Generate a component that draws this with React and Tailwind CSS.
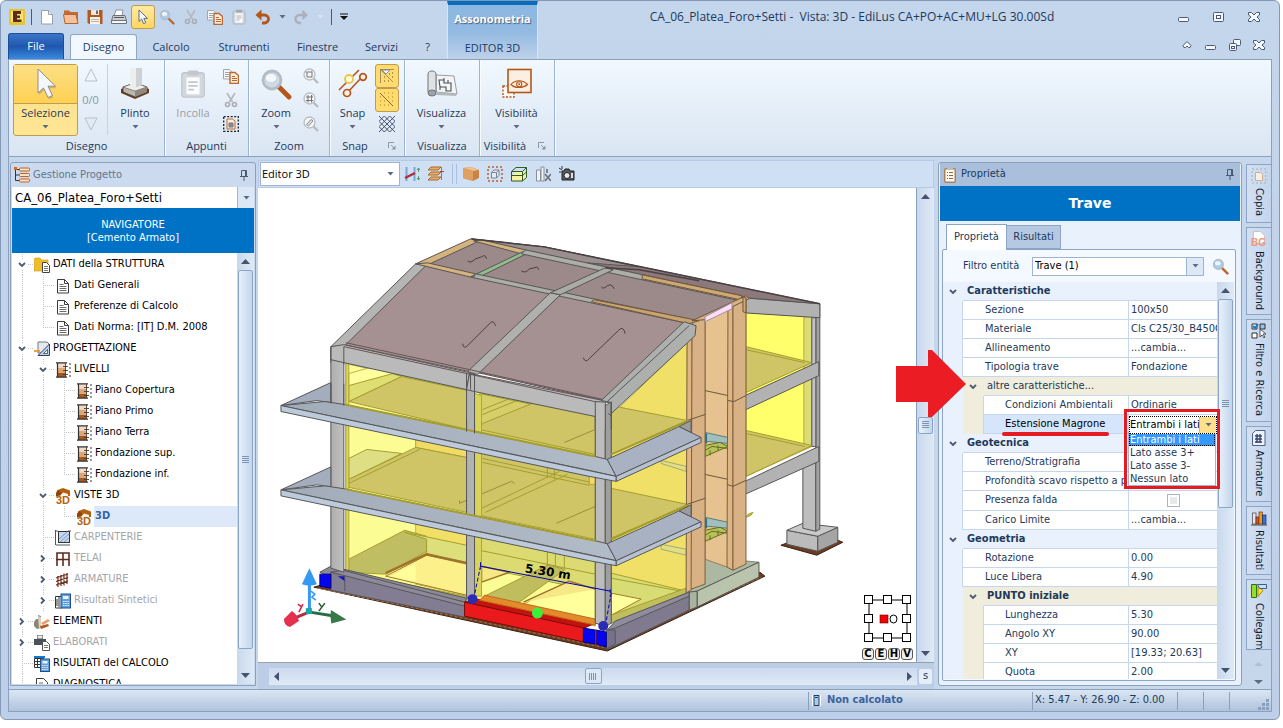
import React from "react";

const UI = "font-['Open_Sans','Noto_Sans',sans-serif]";
const TAHOMA = "font-['DejaVu_Sans_Condensed','DejaVu_Sans',sans-serif]";

/* ---------- small icons ---------- */

const Ico = ({ w = 16, h = 16, box, children, label }) => (
  <svg width={w} height={h} viewBox={box || `0 0 ${w} ${h}`} className="shrink-0" fill="none" aria-hidden={label ? undefined : true} aria-label={label}>
    {children}
  </svg>
);

const Down = ({ color = "#5b6b85" }) => (
  <Ico w={7} h={4}><path d="M.5 0h6L3.500 3.500z" fill={color} /></Ico>
);

const AppLogo = () => (
  <Ico>
    <rect width="16" height="16" rx="1" fill="#e9c52c" />
    <rect x="2" y="2" width="12" height="11" fill="#f8e27a" />
    <path d="M4 2h8v3H8v1.500h3v2.500H8V10.500h4.500V13H4z" fill="#5c2c1c" />
  </Ico>
);
const NewIcon = () => (
  <Ico><path d="M2.500 1.500h7l4 4v9.500h-11z" fill="#fff" stroke="#9a9fa6" /><path d="M9.500 1.500v4h4" stroke="#9a9fa6" fill="#e8ecf0" /></Ico>
);
const OpenIcon = () => (
  <Ico>
    <path d="M1 4V1.500h5L7.500 3H15v11H2z" fill="#c26b33" />
    <path d="M.5 5.500h12.500l2 9H2z" fill="#f3c09a" stroke="#b9632e" />
  </Ico>
);
const SaveIcon = () => (
  <Ico>
    <path d="M.5 1h15v14H2L.5 13.500z" fill="#b4581f" />
    <rect x="4" y="1" width="8" height="5" fill="#f2ebe2" /><rect x="9" y="1.500" width="2" height="3.500" fill="#6b6b6b" />
    <rect x="3" y="8" width="10" height="7" fill="#f7f2ea" /><path d="M4 10.500h8M4 12.500h8" stroke="#b9b2a8" />
  </Ico>
);
const PrintIcon = () => (
  <Ico>
    <path d="M5 1h7l-1 6H3z" fill="#fff" stroke="#8d9299" />
    <path d="M2 6.500h12l1.500 5.500H.5z" fill="#c9ccd0" stroke="#6d7278" />
    <path d="M.5 11.500h15v3H.5z" fill="#f4f5f6" stroke="#6d7278" /><path d="M3 8.500h10" stroke="#555" />
  </Ico>
);
const Cursor = () => (
  <Ico>
    <path d="M4 1v11.500l2.700-2.400 1.900 4.600 2.200-1-2-4.300h3.700z" fill="#f6f8fb" stroke="#5d6b85" strokeWidth="1" />
  </Ico>
);
const BigCursor = () => (
  <Ico w={32} h={32}>
    <path d="M9 3v24l5.500-5 4.500 9.500 4.500-2-4.500-9.300h7.500z" fill="#a98f52" opacity=".45" />
    <path d="M8 1v24l5.500-5 4.500 9.500 4.500-2-4.500-9.300h7.500z" fill="#f5f6f8" stroke="#8d8f93" strokeWidth="1" />
  </Ico>
);
const Magnifier = ({ s = 16, glass = "#a9cdec", handle = "#b9682f" }) => (
  <Ico w={s} h={s} box="0 0 16 16">
    <path d="M9.500 9.500l5 5" stroke={handle} strokeWidth="2.400" strokeLinecap="round" />
    <circle cx="6" cy="6" r="4.500" fill={glass} stroke="#b5bcc4" strokeWidth="1.400" />
    <ellipse cx="5.500" cy="5" rx="2.600" ry="2" fill="#fff" opacity=".8" />
  </Ico>
);
const Scissors = () => (
  <Ico>
    <path d="M4 1l5.500 9M12 1L6.500 10" stroke="#b6bac0" strokeWidth="1.800" />
    <circle cx="4.500" cy="12.500" r="2" stroke="#a9adb3" strokeWidth="1.600" /><circle cx="11.500" cy="12.500" r="2" stroke="#a9adb3" strokeWidth="1.600" />
  </Ico>
);
const CopyIcon = () => (
  <Ico>
    <path d="M.5 1.500h6l2 2v7.500h-8z" fill="#f5f6f8" stroke="#a3a7ad" /><path d="M2 4.500h4M2 6.500h4M2 8.500h4" stroke="#a3a7ad" />
    <path d="M7 4.500h5l3.500 3V15.500H7z" fill="#f9ece0" stroke="#b9682f" strokeWidth="1.400" /><path d="M9 8.500h3M9 10.500h5M9 12.500h5" stroke="#b9682f" />
  </Ico>
);
const PasteIcon = ({ s = 16, c = "#a3a7ad" }) => (
  <Ico w={s} h={s} box="0 0 16 16">
    <rect x="2" y="2" width="12" height="13" rx="1.500" fill="#d3d8df" stroke={c} strokeWidth=".7" />
    <rect x="4.500" y="4.500" width="7" height="9" fill="#fbfcfd" /><rect x="5" y=".8" width="6" height="2.700" rx="1" fill={c} />
    <path d="M5.500 7h5M5.500 9h5M5.500 11h3" stroke={c} strokeWidth=".9" />
  </Ico>
);
const Undo = () => (
  <Ico><path d="M4 6h5.500a3.700 3.700 0 010 8H7" stroke="#b4561a" strokeWidth="2.800" /><path d="M.5 6L6.500.5v11z" fill="#b4561a" /></Ico>
);
const Redo = () => (
  <Ico><path d="M11 6H6.500a3.700 3.700 0 000 8H8" stroke="#a9b0bb" strokeWidth="2.400" /><path d="M15 6L9.500.8v10.400z" fill="#a9b0bb" /></Ico>
);
const SelectClip = () => (
  <Ico>
    <rect x=".7" y=".7" width="14.600" height="14.600" stroke="#1b2230" strokeWidth="1.300" strokeDasharray="2 1.500" />
    <path d="M4 3h5.500l2.500 2v8H4z" fill="#f9ece0" stroke="#b9682f" /><path d="M6 7h4v4H6zM8 7v4M6 9h4" stroke="#4a4f58" strokeWidth=".8" />
  </Ico>
);
const PlinthIcon = () => (
  <Ico w={32} h={32}>
    <path d="M2 21l14-5 14 5v4l-14 6-14-6z" fill="#6b3d20" />
    <path d="M4 19l12-4 12 4v5l-12 5-12-5z" fill="#b9b6ad" stroke="#3b322b" strokeWidth=".8" />
    <path d="M4 19l12-4 12 4-12 4z" fill="#f0efe9" stroke="#5a5650" strokeWidth=".6" />
    <path d="M16 23l12-4v5l-12 5z" fill="#8f8a80" />
    <path d="M11 0h12v17l-6 2.500-6-2.500z" fill="#cdd0d4" /><path d="M11 0h6v19.500l-6-2.500z" fill="#eceef0" />
  </Ico>
);
const SnapIcon = () => (
  <Ico w={32} h={32}>
    <path d="M2 22L22 2M10 25L25 9" stroke="#b4561a" strokeWidth="1.600" />
    <circle cx="12" cy="11" r="4" fill="#fffbd0" stroke="#ecc44c" strokeWidth="1.800" />
    <circle cx="26" cy="9" r="3.300" fill="#fbeee0" stroke="#b4561a" strokeWidth="1.700" /><circle cx="10" cy="25" r="3.500" fill="#fbeee0" stroke="#b4561a" strokeWidth="1.700" />
  </Ico>
);
const PlanIcon = () => (
  <Ico w={32} h={32}>
    <path d="M10 7l18 1 3 18-21-2z" fill="#f3f4f4" stroke="#9a9ea4" />
    <path d="M2 24V6c0-4 8-4 8 0v18z" fill="#dfe2e5" stroke="#6f747b" /><ellipse cx="6" cy="25" rx="4" ry="3" fill="#9ea3a9" stroke="#6f747b" /><path d="M10 24l21 2-1 2-20-1z" fill="#b5b9be" />
    <path d="M13 12h5v3h7v8h-5v-4h-6zM18 10v4M22 12v3M14 22v-4" stroke="#4a4f56" strokeWidth="1.100" />
  </Ico>
);
const EyeIcon = () => (
  <Ico w={32} h={32}>
    <rect x="2" y="18" width="11" height="11" fill="#fff8ef" stroke="#b4561a" strokeDasharray="2 1.500" strokeWidth="1.400" />
    <rect x="7" y="1.500" width="23" height="23" fill="#fbeee2" stroke="#b4561a" strokeWidth="1.600" />
    <path d="M10 16.500c4-5 12-5 16.500 0-4.500 4-12.500 4-16.500 0z" stroke="#b4561a" strokeWidth="1.200" /><circle cx="18.200" cy="16.300" r="2.600" stroke="#b4561a" strokeWidth="1.100" /><circle cx="18.200" cy="16.300" r="1" fill="#b4561a" />
  </Ico>
);
const ZoomSmall = ({ kind }) => (
  <Ico>
    <path d="M10.500 10.500L15 15" stroke="#b6b9be" strokeWidth="2.200" />
    <circle cx="6.500" cy="6.500" r="5.500" fill="#f4f6f8" stroke="#b9bcc1" strokeWidth="1.300" />
    {kind === 0 && <path d="M4 4h5v5H4zM2.500 4h1M9 2.500v1" stroke="#70747b" />}
    {kind === 1 && <path d="M3 5h7M3 8.500h7M5 3v7.500M8.500 3v7.500" stroke="#70747b" />}
    {kind === 2 && <path d="M3.500 8.500l4.500-5 2 1.500-4.500 5z" fill="#dcdfe3" stroke="#8b8f95" />}
  </Ico>
);
const SnapA = () => (
  <Ico><path d="M1 1.500h14M1.500 1v14M2 2l12 12" stroke="#8a7c5e" strokeWidth=".8" /><path d="M3 2h8L7 6z" fill="#eef1f7" stroke="#7c8494" strokeWidth=".8" />
    <path d="M13 5h1M13 9h1M10 6h1M5 9h1M5 13h1M9 13h1" stroke="#5f4a1c" /></Ico>
);
const SnapB = () => (
  <Ico><path d="M1 1l13 13" stroke="#6b5a34" strokeWidth=".9" />
    <path d="M1 5h1M1 9h1M1 13h1M5 9h1M5 13h1M9 13h1M5 1h1M9 1h1M9 5h1M13 1h1M13 5h1M13 9h1" stroke="#a5801f" /></Ico>
);
const SnapC = () => (
  <Ico><path d="M0 0l16 16M0 5.300l10.700 10.700M0 10.700L5.300 16M5.300 0L16 10.700M10.700 0L16 5.300M16 0L0 16M10.700 0L0 10.700M5.300 0L0 5.300M16 5.300L5.300 16M16 10.700L10.700 16" stroke="#34425c" strokeWidth=".9" /></Ico>
);
const Launcher = () => (
  <Ico w={8} h={8}><path d="M.5 6V.5H6" stroke="#8796ad" /><path d="M3 3l3 3" stroke="#8796ad" /><path d="M7.500 3.500v4h-4z" fill="#8796ad" /></Ico>
);

/* ---------- tree icons ---------- */

const treeIcons = {
  folder: <Ico><path d="M0 2.500L1 1h5l1.500 2H14v11H0z" fill="#efbd2c" stroke="#c99a1e" strokeWidth=".6" /><path d="M8.500 5.500h4l3 3v7h-7z" fill="#fff" stroke="#444" /><path d="M10 9.500h4M10 11.500h4M10 13.500h4" stroke="#777" /></Ico>,
  doc: <Ico><path d="M2.500 1.500h7l4 4v9.500h-11z" fill="#fff" stroke="#3c3c3c" /><path d="M9.500 1.500v4h4" stroke="#3c3c3c" /><path d="M4.500 6.500h4M4.500 8.500h7M4.500 10.500h7M4.500 12.500h7" stroke="#6b6b6b" /></Ico>,
  project: <Ico><path d="M4 1h9l2 2v9H4z" fill="#e5e9ef" stroke="#737a84" /><path d="M4 14.500L15.500 3v11.500z" fill="#bcd2ec" stroke="#35425c" /><path d="M9.500 12.500l4-4v4z" fill="#fff" stroke="#35425c" strokeWidth=".8" /><path d="M0 10h6" stroke="#e69c22" strokeWidth="1.800" /></Ico>,
  level: <Ico><rect x="3" y="1" width="7" height="4" fill="#efd9c8" /><rect x="3" y="5.500" width="7" height="4.500" fill="#dda675" /><rect x="3" y="10.500" width="7" height="4.500" fill="#a9561b" /><path d="M1 .8h11M1 15.200h11M2.500 1v14" stroke="#333" strokeWidth="1.200" /><path d="M10.500 1v14M8 4.500h5M8 8.500h5M8 12.500h5" stroke="#4a3a30" strokeWidth=".9" /><path d="M15 1v2M15 5v2M15 9v2M15 13v2" stroke="#333" /></Ico>,
  house: <Ico><path d="M1 5.500L2.500 2 8 0l7 2.500V8h-4L7 5.500 5 9H1z" fill="#b4610f" /><path d="M5 8l3-3.500L13 6v3H5z" fill="#fbf3e8" /><path d="M1 5l2-3 4 3.500L4 8H1z" fill="#8e4706" /><text x="1" y="15.500" fontSize="11" fontWeight="bold" fontFamily="Liberation Sans, sans-serif" fill="#b4610f" stroke="#fff" strokeWidth=".6" paintOrder="stroke">3D</text></Ico>,
  carp: <Ico><rect x="3.500" y="1.500" width="11" height="11" fill="#c5d6ee" stroke="#333" /><path d="M4 9l8-7M5 12l9-8M9 12l5-4" stroke="#7f97bf" /><path d="M.5 0v15M1 15h14M1 1h2M13 1h3" stroke="#555" /></Ico>,
  frame: <Ico><path d="M2 15V2h12v13M8 2v13M1 8.500h13" stroke="#5c2c1c" strokeWidth="1.600" /></Ico>,
  rebar: <Ico><path d="M1 6l12-4M1 9.500l12-4M1 13l12-4M3 4v11M6 3v11M9 1.500v12M12 1v11" stroke="#6e2f1d" strokeWidth="1.200" /></Ico>,
  results: <Ico><path d="M.5 3.500h6V15h-6z" fill="#fff" stroke="#333" /><path d="M2 6v7M4 4v10" stroke="#333" /><rect x="6" y="1" width="9.500" height="14" fill="#5fa0dc" stroke="#1f4e86" /><rect x="8" y="3" width="5.500" height="3" fill="#e8f3fb" /><path d="M8 8.500h6M8 10.500h6M8 12.500h6" stroke="#d6ebfb" strokeDasharray="1.500 .7" /></Ico>,
  elements: <Ico><path d="M0 8l2-3h2V1l3 1v12l-4 1-3-3z" fill="#8d8578" /><path d="M4 2l3 1v11l-2 1z" fill="#d9d2c2" /><path d="M7 9l7-4 2 2-7 4z" fill="#e9a06c" /><path d="M6 12l8-2 1 2-8 3z" fill="#b4561a" /></Ico>,
  print: <Ico><path d="M3 0h6v4H3zM0 4h12v6H0z" fill="#4c5057" /><path d="M3.500.5h5v3h-5z" fill="#e8e8e8" /><path d="M8.500 6.500h4l3 3v6h-7z" fill="#fff" stroke="#555" /><path d="M10 10.500h4M10 12.500h4" stroke="#777" /></Ico>,
  calc: <Ico><path d="M0 0h11v2H0z" fill="#1879c8" /><path d="M.5 2.500h9v9h-9zM.5 5.500h9M.5 8.500h9M3.500 2.500v9" fill="#fff" stroke="#333" /><rect x="6.500" y="3" width="9" height="12.500" fill="#5fa0dc" stroke="#1f4e86" /><rect x="8.500" y="5" width="5" height="2.500" fill="#e8f3fb" /><path d="M8 9.500h6M8 11.500h6M8 13.500h6" stroke="#d6ebfb" strokeDasharray="1.500 .7" /></Ico>,
  diag: <Ico><path d="M2.500 1.500h7l4 4v10h-11z" fill="#fff" stroke="#3c3c3c" /><path d="M5 6h4M5 9h7" stroke="#6b6b6b" /><path d="M12 8l4 7H8z" fill="#f2c230" /></Ico>,
};

/* ---------- header ---------- */

const QuickBtn = ({ label, active, children }) => (
  <button aria-label={label} className={active ? "flex h-6 w-6 items-center justify-center rounded-[3px] border border-[#c29b4c] bg-gradient-to-b from-[#fdeaa4] to-[#ffd75e]" : "flex h-6 w-6 items-center justify-center"}>
    {children}
  </button>
);

const Tabs = () => (
  <nav className="flex h-[26px] items-end text-[#1e395b]">
    <button className="ml-[7px] h-[26px] w-14 rounded-t-[3px] border border-b-0 border-[#1c4d98] bg-gradient-to-b from-[#3c76c8] via-[#1f57ae] to-[#3a8ae0] pb-px text-white">File</button>
    <button className="ml-1.5 h-[25px] w-[67px] rounded-t-[3px] border border-b-0 border-[#8fa6c6] bg-[#f1f8ff]">Disegno</button>
    <button className="h-6 w-[68px]">Calcolo</button>
    <button className="h-6 w-[78px]">Strumenti</button>
    <button className="h-6 w-[69px]">Finestre</button>
    <button className="h-6 w-[59px]">Servizi</button>
    <button className="h-6 w-[33px]">?</button>
  </nav>
);

const winStroke = { fill: "#f3f8fe", stroke: "#4b5a72" };
const MinGlyph = () => <Ico w={12} h={12}><rect x=".5" y="6.500" width="10" height="4" rx="1" {...winStroke} /></Ico>;
const MaxGlyph = () => <Ico w={12} h={12}><rect x=".5" y="1.500" width="10" height="9" rx="1" {...winStroke} /><rect x="3.500" y="4.500" width="4" height="3" fill="#fff" stroke="#4b5a72" /></Ico>;
const RestoreGlyph = () => <Ico w={12} h={12}><rect x="4.500" y=".5" width="7" height="6" rx="1" {...winStroke} /><rect x=".5" y="4.500" width="7" height="7" rx="1" {...winStroke} /><rect x="2.500" y="7.500" width="3" height="2" stroke="#4b5a72" /></Ico>;
const CloseGlyph = () => <Ico w={12} h={12}><path d="M.5 1.500h3L6 4l2.500-2.500h3V4L9 6l2.500 2.500v2h-3L6 8l-2.500 2.500h-3v-2L3 6 .5 4z" {...winStroke} /></Ico>;
const UpGlyph = () => <Ico w={12} h={12}><path d="M6 2.500l4 4-1 2H7.500L6 7 4.500 8.500H3l-1-2z" {...winStroke} /></Ico>;

const Header = () => (
  <header className={`flex ${UI} text-[11px] text-[#1e395b]`}>
    <div className="w-[446px] shrink-0">
      <div className="flex h-8 items-center pl-2">
        <AppLogo />
        <span className="mr-[3px] ml-1.5 h-4 w-px bg-[#4b5a72]" />
        <QuickBtn label="Nuovo"><NewIcon /></QuickBtn>
        <QuickBtn label="Apri"><OpenIcon /></QuickBtn>
        <QuickBtn label="Salva"><SaveIcon /></QuickBtn>
        <QuickBtn label="Stampa"><PrintIcon /></QuickBtn>
        <QuickBtn label="Selezione" active><Cursor /></QuickBtn>
        <QuickBtn label="Zoom"><Magnifier /></QuickBtn>
        <QuickBtn label="Taglia"><Scissors /></QuickBtn>
        <QuickBtn label="Copia"><CopyIcon /></QuickBtn>
        <QuickBtn label="Incolla"><PasteIcon /></QuickBtn>
        <QuickBtn label="Annulla"><Undo /></QuickBtn>
        <span className="ml-1 flex w-2.5"><Down /></span>
        <QuickBtn label="Ripeti"><Redo /></QuickBtn>
        <span className="ml-1 flex w-2.5"><Down color="#dbe5f2" /></span>
        <span className="mx-1 h-4 w-px bg-[#4b5a72]" />
        <button aria-label="Personalizza" className="pl-1"><Ico w={8} h={8}><path d="M0 1h8" stroke="#111" /><path d="M0 3h8L4 7z" fill="#111" /></Ico></button>
      </div>
      <Tabs />
    </div>
    <div className="flex w-[91px] shrink-0 flex-col items-center justify-between border-x border-t-4 border-x-[#d7e5f4] border-t-[#0a6cbd] bg-gradient-to-b from-[#8bb7e0] via-[#93bae2] to-[#bed1ea] pt-1.5 pb-px">
      <span className="font-bold text-white [text-shadow:1px_1px_1px_#44617f]">Assonometria</span>
      <button className="h-5">EDITOR 3D</button>
    </div>
    <div className="flex min-w-0 flex-1 flex-col pr-2">
      <div className="flex h-8 items-center">
        <h1 className="min-w-0 flex-1 truncate text-center text-[12px]">CA_06_Platea_Foro+Setti -&nbsp; Vista: 3D - EdiLus CA+PO+AC+MU+LG 30.00Sd</h1>
        <div className="grid w-[105px] grid-cols-3 justify-items-center">
          <button aria-label="Riduci a icona"><MinGlyph /></button>
          <button aria-label="Ingrandisci"><MaxGlyph /></button>
          <button aria-label="Chiudi"><CloseGlyph /></button>
        </div>
      </div>
      <div className="grid h-6 w-24 grid-cols-4 items-center justify-items-center self-end">
        <button aria-label="Comprimi barra"><UpGlyph /></button>
        <button aria-label="Riduci documento"><MinGlyph /></button>
        <button aria-label="Ripristina documento"><RestoreGlyph /></button>
        <button aria-label="Chiudi documento"><CloseGlyph /></button>
      </div>
    </div>
  </header>
);

const Group = ({ label, launcher, width, children }) => (
  <section className={`flex shrink-0 flex-col border-r border-[#9db4d2] shadow-[1px_0_0_#f8fcff] ${width}`}>
    <div className="flex h-[77px] items-start pt-1">{children}</div>
    <div className="flex h-5 items-center">
      <span className="flex-1 text-center">{label}</span>
      {launcher && <button aria-label={`Opzioni ${label}`} className="w-6 pl-2"><Launcher /></button>}
    </div>
  </section>
);

const BigBtn = ({ label, icon, disabled, width = "w-[60px]" }) => (
  <button className={`flex h-[71px] flex-col items-center ${width} ${disabled ? "text-[#9a9fa6]" : ""}`}>
    <span className="flex h-10 items-center">{icon}</span>
    <span className="h-[21px] leading-[18px]">{label}</span>
    {!disabled && <Down />}
  </button>
);

const Ribbon = () => (
  <div className={`mx-[7px] flex h-[98px] shrink-0 border border-[#8ba0bc] bg-gradient-to-b from-[#f1f8ff] to-[#d9e5f2] ${UI} text-[11px] text-[#1e395b]`}>
    <Group label="Disegno" width="w-[156px]">
      <button className="ml-1 flex h-[72px] w-[65px] flex-col items-center rounded-[3px] border border-[#c29b4c] bg-gradient-to-b from-[#fbe08a] to-[#ffe694]">
        <span className="flex h-[39px] w-full items-center justify-center border-b border-[#c29b4c] bg-gradient-to-b from-[#fcdf83] to-[#ffd152]"><BigCursor /></span>
        <span className="h-[21px] leading-[18px]">Selezione</span>
        <Down />
      </button>
      <div className="flex h-[71px] w-[30px] flex-col items-center justify-between border-r border-[#c3d2e5] py-1 pr-1 text-[#8d949e]">
        <Ico w={14} h={14}><path d="M7 1l6 12H1z" stroke="#b7bec8" /></Ico>
        <span className="leading-4">0/0</span>
        <Ico w={14} h={14}><path d="M7 13L1 1h12z" stroke="#b7bec8" /></Ico>
      </div>
      <BigBtn label="Plinto" icon={<PlinthIcon />} width="w-[54px]" />
    </Group>
    <Group label="Appunti" width="w-[84px]">
      <BigBtn label="Incolla" icon={<PasteIcon s={30} c="#c3c7cd" />} disabled width="w-14" />
      <div className="flex flex-col items-center gap-2 pt-1 pl-0.5">
        <button aria-label="Copia"><CopyIcon /></button>
        <button aria-label="Taglia"><Scissors /></button>
        <button aria-label="Seleziona appunti"><SelectClip /></button>
      </div>
    </Group>
    <Group label="Zoom" width="w-[81px]">
      <BigBtn label="Zoom" icon={<Magnifier s={32} glass="#cdd9e4" handle="#b4561a" />} width="w-[54px]" />
      <div className="flex flex-col items-center gap-2 pt-1">
        <button aria-label="Zoom finestra"><ZoomSmall kind={0} /></button>
        <button aria-label="Zoom estensioni"><ZoomSmall kind={1} /></button>
        <button aria-label="Zoom precedente"><ZoomSmall kind={2} /></button>
      </div>
    </Group>
    <Group label="Snap" width="w-[75px]" launcher>
      <BigBtn label="Snap" icon={<SnapIcon />} width="w-[45px]" />
      <div className="flex flex-col items-center">
        <button aria-label="Snap oggetto" className="flex h-6 w-6 items-center justify-center rounded-[3px] border border-[#c29b4c] bg-[#ffdc6d]"><SnapA /></button>
        <button aria-label="Snap griglia" className="flex h-6 w-6 items-center justify-center rounded-[3px] border border-[#c29b4c] bg-[#ffdc6d]"><SnapB /></button>
        <button aria-label="Griglia" className="pt-1"><SnapC /></button>
      </div>
    </Group>
    <Group label="Visualizza" width="w-[75px]"><BigBtn label="Visualizza" icon={<PlanIcon />} width="w-[73px]" /></Group>
    <Group label="Visibilità" width="w-[75px]" launcher><BigBtn label="Visibilità" icon={<EyeIcon />} width="w-[73px]" /></Group>
  </div>
);

/* ---------- shared ---------- */

const Pin = () => (
  <Ico w={8} h={11}><path d="M1.500.5h5v6h-5zM0 6.500h8M4 7v4M5.500 1v5" stroke="#4b5a72" /></Ico>
);

const VScroll = ({ top, thumb }) => (
  <div className="flex w-[17px] shrink-0 flex-col items-center justify-between bg-gradient-to-r from-[#c8d8ec] to-[#dfeaf6]" role="presentation">
    <div className="flex h-[17px] items-center"><Ico w={9} h={5}><path d="M0 5h9L4.500 0z" fill="#44546e" /></Ico></div>
    <div className={`flex w-[15px] flex-col items-center justify-center rounded-[2px] border border-[#8ba5c9] bg-gradient-to-r from-[#e8f1fb] to-[#c3d5ec] ${thumb}`}>
      <Ico w={7} h={8}><path d="M0 .5h7M0 2.500h7M0 4.500h7M0 6.500h7" stroke="#7d93b5" /></Ico>
    </div>
    {top && <div className="flex-1" />}
    <div className="flex h-[17px] items-center"><Ico w={9} h={5}><path d="M0 0h9L4.500 5z" fill="#44546e" /></Ico></div>
  </div>
);

const Combo = ({ id, label, value, className, pad = "pl-[3px]", btn = "bg-[#dce8f6] border-l border-[#9db4d2]" }) => (
  <div className={`relative flex bg-white ${className}`}>
    <select id={id} aria-label={label} className={`w-full appearance-none bg-transparent text-black outline-none ${pad}`}>
      <option>{value}</option>
    </select>
    <span className={`pointer-events-none absolute inset-y-0 right-0 flex w-[17px] items-center justify-center ${btn}`}><Down /></span>
  </div>
);

/* ---------- project tree ---------- */

const rows = [
  ["e", "folder", "DATI della STRUTTURA"],
  ["vt", "doc", "Dati Generali"],
  ["vt", "doc", "Preferenze di Calcolo"],
  ["vl", "doc", "Dati Norma: [IT] D.M. 2008"],
  ["e", "project", "PROGETTAZIONE"],
  ["ve", "level", "LIVELLI"],
  ["vvt", "level", "Piano Copertura"],
  ["vvt", "level", "Piano Primo"],
  ["vvt", "level", "Piano Terra"],
  ["vvt", "level", "Fondazione sup."],
  ["vvl", "level", "Fondazione inf."],
  ["ve", "house", "VISTE 3D"],
  ["vvl", "house", "3D", "sel"],
  ["vt", "carp", "CARPENTERIE", "off"],
  ["vc", "frame", "TELAI", "off"],
  ["vc", "rebar", "ARMATURE", "off"],
  ["vc", "results", "Risultati Sintetici", "off"],
  ["c", "elements", "ELEMENTI"],
  ["c", "print", "ELABORATI", "off"],
  ["t", "calc", "RISULTATI del CALCOLO"],
  ["t", "diag", "DIAGNOSTICA"],
];

const Guide = ({ kind }) => (
  <Ico w={21} h={21}>
    <path d={kind === "l" ? "M10.500 0v11" : "M10.500 0v21"} stroke="#c3c7cc" strokeDasharray="1 1" />
    {kind !== "v" && <path d="M12 10.500h9" stroke="#c3c7cc" strokeDasharray="1 1" />}
    {kind === "e" && <><rect x="6" y="6" width="9" height="9" fill="#fff" /><path d="M7 9l3 3 3-3" stroke="#4b5a72" strokeWidth="1.800" /></>}
    {kind === "c" && <><rect x="6" y="5" width="9" height="11" fill="#fff" /><path d="M8 7.500l3 3-3 3" stroke="#4b5a72" strokeWidth="1.800" /></>}
  </Ico>
);

const tone = { sel: "bg-[#dde9f8] text-[#3563a8] font-bold", off: "text-[#a3a5a8]" };

const ProjectPanel = () => (
  <aside className={`flex w-[246px] shrink-0 flex-col rounded-t-[3px] border border-[#8ba0bc] bg-[#cbdaee] px-px pb-px ${TAHOMA} text-[11px]`}>
    <div className="flex h-6 shrink-0 items-center gap-[3px] pl-0.5 text-[#65758d]">
      <Ico><path d="M1.500 1v12.500h4M1 2.500h4M1 8h4" stroke="#333" /><rect x="0" y="0" width="3" height="3" fill="#d2691e" /><rect x="5.500" y="1" width="10" height="3" rx="1" fill="#ffe2bd" stroke="#b9632e" /><rect x="5.500" y="6.500" width="10" height="3" rx="1" fill="#ffe2bd" stroke="#b9632e" /><rect x="5.500" y="12" width="10" height="3" rx="1" fill="#ffe2bd" stroke="#b9632e" /></Ico>
      <h2 className="flex-1">Gestione Progetto</h2>
      <button aria-label="Blocca" className="pr-1.5"><Pin /></button>
    </div>
    <Combo id="project" label="Progetto" value="CA_06_Platea_Foro+Setti" className="h-[21px] shrink-0 text-[13px]" />
    <div className="flex h-[45px] shrink-0 flex-col items-center justify-center bg-[#0072c6] leading-[13px] text-white">
      <span>NAVIGATORE</span><span>[Cemento Armato]</span>
    </div>
    <div className="flex min-h-0 flex-1 bg-white">
      <ul className="min-w-0 flex-1 overflow-hidden pt-px">
        {rows.map(([g, icon, text, state]) => (
          <li key={text} className="flex h-[21px] items-center">
            {g.split("").map((k, i) => <Guide key={i} kind={k} />)}
            <span className="pr-0.5 pl-px">{treeIcons[icon]}</span>
            <span className={`flex h-[21px] items-center pl-px whitespace-nowrap ${state === "sel" ? "flex-1" : ""} ${state ? tone[state] : "text-black"}`}>{text}</span>
          </li>
        ))}
      </ul>
      <VScroll top thumb="h-[379px]" />
    </div>
  </aside>
);

/* ---------- 3D scene ---------- */

const O = "#565656";
const P = ({ d, f, s = O, w = 1, ...r }) => <path d={d} fill={f || "none"} stroke={s} strokeWidth={w} strokeLinejoin="round" {...r} />;

const Scene = () => (
  <svg viewBox="258 188 659 475" preserveAspectRatio="xMinYMin meet" className="absolute inset-0 h-full w-full" role="img" aria-label="Vista 3D della struttura">
    <defs>
      <linearGradient id="slab" x1="0" x2="1"><stop offset="0" stopColor="#a2abb8" /><stop offset="1" stopColor="#b2bcc9" /></linearGradient>
      <linearGradient id="col" x1="0" x2="1"><stop offset="0" stopColor="#aeaeae" /><stop offset="1" stopColor="#c0c0c0" /></linearGradient>
    </defs>

    {/* ground strip */}
    <P d="M314 588L608 652 766 577 761 573 690 606 608 644 331 583z" f="#6a3c22" s="#3c2214" />
    <P d="M318 589L608 649 762 578" s="#a87248" strokeDasharray="3 2" />

    {/* right isolated footing */}
    <P d="M782 546L790 543 839 541 844 543 818 556z" f="#6a3c22" s="#3c2214" />
    <P d="M788 531L819 537 819 552 788 545z" f="#bcbcbc" />
    <P d="M819 537L839 528 839 543 819 552z" f="#a5a5a5" />
    <P d="M788 531L804 524 839 528 819 537z" f="#c9c9c9" />
    <P d="M804 462H817V532L804 529z" f="#bdbdbd" />
    <P d="M817 304H821V530L817 532z" f="#a3a3a3" />

    {/* right wing */}
    <P d="M747 313L813 317V447L747 477z" f="#ffff6c" s="#b3ab3c" />
    <P d="M805 317H813V447L805 450z" f="#dcdc76" s="#b3ab3c" />
    <P d="M813 318H817V447H813z" f="#c2c2c2" />
    <P d="M747 347L813 363 747 393z" f="#cfc466" s="#a59e2e" />
    <P d="M747 350L806 363" s="#a59e2e" />
    <P d="M747 431L813 446 747 477z" f="#cfc466" s="#a59e2e" />
    <P d="M747 434L806 447" s="#a59e2e" />
    <P d="M744 397L820 362 820 376 745 411z" f="#b2b2b2" />
    <P d="M746 482L820 447 820 462 746 495z" f="#b2b2b2" />
    <P d="M744 298L821 304V318L744 313z" f="#b2b2b2" />
    <P d="M749 515l5 -2 -2 3 -5 2z" f="#c8c83c" s="#a59e2e" />

    {/* base slab on the right */}
    <P d="M690 593L706 558 760 563 698 592z" f="#adb8a2" s="#7d8577" />
    <P d="M698 592L760 563V578L698 608z" f="#bac4ad" />
    <P d="M690 593L698 592V608L690 611z" f="#aab3a0" />

    {/* stair core */}
    <P d="M706 318L734 303V570L706 560z" f="#e6c290" s="#9b7b52" />
    <P d="M706 391L729 396M706 475L729 480" s="#6d563a" />
    {[0, 85].map((y) => (
      <g key={y} transform={`translate(0 ${y})`}>
        <P d="M706 433L729 438V444L709 442 706 444z" f="#9fc0bd" s="#5e7c7a" />
        <P d="M706 446L721 443 729 447 706 457z" f="#b9c25a" s="#5f6b22" />
        <P d="M706 451L713 447 729 449M711 456V451M719 451V446" s="#5f6b22" />
        <P d="M707 434V444" s="#2c6f84" w={2} />
      </g>
    ))}
    <P d="M729 299L734 296V571L728 568z" f="#e0b584" s="#7b6040" />
    <P d="M734 296L747 299V565L734 571z" f="#d8b185" s="#7b6040" />
    <P d="M729 401L735 402 747 396M728 485L734 487 747 481" s="#6d563a" />

    {/* interior glass, gable side */}
    <P d="M612 416L688 343V594L612 624z" f="#f0e068" s="#c2b447" />
    <P d="M612 406L688 421 612 455z" f="#cfc466" s="#a59e2e" />
    <P d="M612 489L688 505 612 541z" f="#cfc466" s="#a59e2e" />
    <P d="M662 461L687 467V472L662 464zM662 545L687 550V556L662 550z" f="#e5dd84" s="#9cac78" />
    <P d="M612 574L687 592 676 600 612 624z" f="#d8dc74" s="#a59e2e" />
    <P d="M612 579L682 592" s="#a59e2e" />
    <P d="M612 594L642 600 612 616z" f="#ffffa0" s="#a07a2a" />
    <P d="M612 624L687 594V589L612 616z" f="#c1bf5c" s="#a59e2e" />
    <P d="M688 338H693V590L687 594z" f="#e0b584" s="#7b6040" />
    <P d="M693 322L706 317V585L692 590z" f="#d8b185" s="#7b6040" />
    <P d="M688 421L706 415M688 505L706 499" s="#6d563a" />

    {/* interior glass, front */}
    <P d="M346 364L596 418V627L346 573z" f="#fcfc94" s="#b9b24a" />
    <P d="M349 390L349 374 370 368 395 374z" f="#ffffa0" s="#b9b24a" />
    <P d="M349 402V386L393 374 402 377z" f="#dede72" s="#a59e2e" />
    <P d="M349 402L402 377 468 391V430z" f="#cfc466" s="#a59e2e" />
    <P d="M480 394L596 418V457L475 432z" f="#d6ce6a" s="#a59e2e" />
    <P d="M483 424L535 403 596 416V455L480 430z" f="#cfc466" s="#a59e2e" />
    <P d="M483 410L513 398M483 415L520 400" s="#a59e2e" />
    <P d="M416 439L467 450V458L416 448z" f="#f0dc64" s="#b9a23a" />
    <P d="M349 459L367 450 402 454 349 480z" f="#dede84" s="#a59e2e" />
    <P d="M349 480L416 448 467 458V513L349 488z" f="#cfc466" s="#a59e2e" />
    <P d="M349 484L420 450" s="#a59e2e" />
    <P d="M475 452L596 478V540L475 515z" f="#cfc466" s="#a59e2e" />
    <P d="M483 459L596 484M483 463L590 486M480 510L560 472M486 513L568 475M548 468V478M555 469V480" s="#a59e2e" />
    <P d="M590 476H596V485H590z" f="#f0dc64" s="#b9a23a" />
    <P d="M460 504L512 482 515 484M460 504V501M557 524L596 507M565 443L596 430" s="#9a8f3a" />

    {/* ground floor interior */}
    <P d="M416 524L467 535V596L416 585z" f="#f2df66" s="#c2b447" />
    <P d="M349 560L405 531 427 537V552L386 575 349 573z" f="#c0be62" s="#a59e2e" />
    <P d="M405 533L467 546V563L427 555V540z" f="#dde07a" s="#a59e2e" />
    <P d="M386 577L427 556 467 564V596z" f="#fbf08a" s="#a07a2a" />
    <P d="M386 574L427 555 467 564" s="#9c742c" w={2.500} />
    <P d="M391 577L416 564V582z" f="#ffff9c" s="none" />
    <P d="M475 535L596 561V592L475 567z" f="#dbdb72" s="#a59e2e" />
    <P d="M480 551L596 575M548 552V566M556 553V567M565 556V568" s="#a59e2e" />
    <P d="M483 598L548 566 566 570 520 603 485 602z" f="#bfbd5e" s="#a59e2e" />
    <P d="M524 605L566 584 596 590V622z" f="#ffff9c" s="#b9a23a" />
    <P d="M482 567L510 573 482 583zM524 603L570 582 596 590" f="#f6e884" s="#9c742c" w={1.500} />
    <P d="M349 574L467 597V603L345 577z" f="#c2bd5a" s="#a59e2e" />
    <P d="M346 364H349V573H346zM475 394L482 396V597H475z" f="#d8d45c" s="#b0a838" />

    {/* front foundation */}
    <P d="M320 573L331 567 467 599 465 604 331 578z" f="#8b8898" s={O} />
    <P d="M331 573L465 603V618L331 591z" f="#827d92" />
    <P d="M331 573L343 571 465 603V607z" f="#8e8a9b" />
    <P d="M320 575h11v14l-11 -2z" f="#0505f0" s="#000080" />
    <path d="M338 577l7 5v-5z" fill="#1414c8" />
    <P d="M345 577V592" s={O} />
    <P d="M465 603L585 628V643L465 617z" f="#ea1a1c" s="#7a0d0d" />
    <P d="M465 603L478 600 596 624 585 629z" f="#c4120f" s="#7a0d0d" />
    <P d="M485 596L596 620V626L480 601z" f="#e48a2a" s="#c06a1a" />
    <P d="M612 629L690 595V611L609 650z" f="#7f7a8e" />
    <P d="M608 631L616 622 690 593V597L616 629z" f="#8f8c9e" />
    <P d="M607 631H616V645L607 650z" f="#77728a" />
    <P d="M584 629L596 631V645L584 643zM597 631L607 633V648L597 645z" f="#0505f0" s="#000080" />
    <P d="M596.500 630V646" s="#e01414" />

    {/* columns */}
    <P d="M331 348H344V573L331 569z" f="url(#col)" />
    <P d="M467 374H475V600L467 598z" f="#b2b2b2" />
    <P d="M596 402H606V627L596 624z" f="#bcbcbc" />
    <P d="M606 406L612 402V624L606 628z" f="#9f9f9f" />

    {/* balconies */}
    {[0, 84.500].map((y) => (
      <g key={y} transform={`translate(0 ${y})`}>
        <P d="M281 406L331 383V403L317 401z" f="#a3adbd" />
        <P d="M281 406L325 402 345 405 596 457 608 460 617 477 590 471 281 406z" f="url(#slab)" />
        <P d="M281 406L617 477V482L590 477 281 412z" f="#bdcadb" />
        <P d="M608 460L680 427 702 438 617 477z" f="#a9b2c2" />
        <P d="M617 477L702 438V443L617 482z" f="#b7c3d4" />
        <P d="M345 405L596 457M612 455L690 421" s="#a59e2e" w={2} />
        <P d="M680 427L692 421V433z" f="#9d9d9d" />
      </g>
    ))}
    <P d="M331 384V404M344 384V406M467 420V432M475 422V434" s={O} />

    {/* roof */}
    <P d="M472 239L545 247 821 304 747 298 612 268z" f="#8d797b" />
    <P d="M472 239L545 247 640 267 575 262z" f="#9a8e8e" />
    <P d="M424 264L478 240 747 298 693 322z" f="#9c898a" />
    <P d="M344 345L424 264 553 294 470 372z" f="#a69192" />
    <P d="M478 373L561 295 690 322 604 401z" f="#a69192" />
    <P d="M331 347L416 264 427 265 344 347z" f="#b5b5b3" />
    <P d="M416 264L471 239 480 241 428 265z" f="#d6b27c" />
    <P d="M416 264L428 263 476 274 474 278z" f="#d6b27c" />
    <P d="M474 241L482 240 526 250 522 254z" f="#d6b27c" />
    <P d="M471 277L523 252 529 253 480 277z" f="#94bd8d" />
    <P d="M476 274L693 320 690 324 474 278z" f="#aeaea8" />
    <P d="M595 300L700 321 690 324 592 302z" f="#c9a471" s="#6d563a" />
    <P d="M526 250L743 296 741 301 522 254z" f="#aeaea8" />
    <P d="M643 275L743 296 741 300 643 279z" f="#cfa972" s="#6d563a" />
    <P d="M468 372L551 293 561 295 478 375z" f="#b0b0ae" />
    <P d="M551 293L606 268 614 270 561 295z" f="#aaaaa6" />
    <P d="M472 239L545 247 690 277 821 304M606 268L640 270 700 281" s="#4a4242" w={1.500} />
    <P d="M693 321L747 296 750 299 706 320z" f="#d8b185" s="#6d563a" />
    <P d="M706 317L733 303V309L706 322z" f="#fbdffb" s="#a58ca5" />
    <P d="M744 298V312L747 313V298z" f="#d2a874" s="#6d563a" />

    {/* eave beams */}
    <P d="M331 347L344 345 470 373 467 390 344 363 331 360z" f="#bababa" />
    <P d="M470 374L604 401 596 417 475 392 467 390z" f="#bababa" />
    <P d="M346 343L470 370 604 400M344 347L600 403" s="#6b5152" />
    <P d="M331 347V363M344 347V365M467 374V392M471 374V390M475 374V394" s={O} />
    <P d="M602 401L685 322 697 326 696 336 612 414 612 403z" f="#aeb0ae" />
    <P d="M608 402L690 326M612 402V416L609 414" s={O} />
    <P d="M596 402H606V430H596z" f="#bcbcbc" s="none" />
    <P d="M596 402V430M606 404V430M612 414V430M596 402L612 403" s={O} />

    {/* slope symbols */}
    <P d="M463 344Q464 350 468 346L491 323Q494 320 496 326M584 358Q586 364 590 359L620 330Q624 326 626 334M468 261Q471 264 476 259L482 257Q486 254 487 259M522 271Q526 274 530 269L535 268Q539 266 539 270M602 287Q604 290 608 286L611 285Q613 285 615 289" s="#4b3e3f" />

    {/* dimension */}
    <P d="M474 600L481 567M481 563V570M606 627L612 594M611 590V598" s="#0000b4" strokeDasharray="4 2" />
    <P d="M481 567L611 592" s="#0000b4" />
    <text x="525" y="573" fontSize="12" fontWeight="bold" fontFamily="DejaVu Sans, sans-serif" fill="#000" transform="rotate(9 525 573)">5.30 m</text>
    <circle cx="473" cy="600" r="5" fill="#2b2bb4" /><circle cx="604" cy="627" r="5" fill="#2b2bb4" />
    <circle cx="538" cy="614" r="5.500" fill="#3bf03b" />

    {/* axes triad */}
    <P d="M309.500 612V584" s="#3499f2" w={3} />
    <path d="M302 585q7.500 3 15 0l-7.500-16z" fill="#3499f2" />
    <P d="M309 613L297 618" s="#b62a44" w={3} />
    <path d="M284 620l8-8q6 4 7 10l-9 6q-6-1-6-8z" fill="#e5304f" />
    <P d="M310 613L334 617" s="#2a6b45" w={3} />
    <path d="M331 611l15.500 9.500-15 4q-1.500-7-.5-13.500z" fill="#37794b" />
    <rect x="306" y="609" width="6" height="6" fill="#18a7a7" />
    <P d="M298 605l4 3M303 605l-4 8" s="#d42848" w={1.600} /><P d="M319 604l3 4M325 604l-6 8" s="#2a5b35" w={1.600} /><P d="M311 592l4 3-3 3 4 3" s="#3499f2" w={1.600} />
  </svg>
);

const Handles = () => {
  const pts = [[0, 0], [19, 0], [38, 0], [0, 19], [38, 19], [0, 38], [19, 38], [38, 38]];
  return (
    <div className="absolute right-[3px] bottom-[2px] flex flex-col items-center gap-[5px]">
      <Ico w={48} h={48}>
        <rect x="5" y="5" width="38" height="38" stroke="#000" />
        {pts.map(([x, y]) => <rect key={`${x}-${y}`} x={x + 0.5} y={y + 0.5} width="8" height="8" fill="#fff" stroke="#000" />)}
        <rect x="16" y="20" width="8" height="8" fill="#f00505" stroke="#600" strokeWidth=".6" />
        <ellipse cx="29.500" cy="24" rx="3.500" ry="4" fill="#fff" stroke="#000" />
      </Ico>
      <div className="flex gap-px">
        {["C", "E", "H", "V"].map((c) => (
          <button key={c} className="h-3 w-3 rounded-[3px] border border-[#555] bg-[#f0efe9] text-center font-['DejaVu_Sans',sans-serif] text-[10px] leading-[10px] font-bold text-black">{c}</button>
        ))}
      </div>
    </div>
  );
};

const viewTools = [
  ["Sezione", <Ico key="a"><path d="M2.500 1v14M10.500 1v14" stroke="#7ba6d6" strokeWidth="2" /><path d="M1 12l10-5" stroke="#b22c3a" strokeWidth="2.500" /><path d="M14.500 2v4M14.500 10v4M13 4l1.500-2L16 4M13 12l1.500 2 1.500-2" stroke="#5a9a72" /></Ico>],
  ["Livelli", <Ico key="b"><path d="M3 1h10l-3 3H0zM3 6h10l-3 3H0zM3 11h10l-3 3H0z" fill="#e8ad66" stroke="#a8682a" /><path d="M13.500 1v13" stroke="#5a9a72" /><path d="M12 5.500h4" stroke="#c0392b" /></Ico>],
  null,
  ["Solido", <Ico key="c"><path d="M0 2l8-1 8 3v8l-6 3-10-3z" fill="#c98445" /><path d="M0 2l8-1 8 3-6 1z" fill="#edc08f" /><path d="M0 2l10 3v10L0 12z" fill="#dfa060" /></Ico>],
  ["Seleziona solido", <Ico key="d"><rect x="1" y="1" width="14" height="14" stroke="#c0602a" strokeDasharray="2 2" strokeWidth="1.500" /><path d="M4.500 6.500L7 4h5v5.500L9.500 12h-5zM4.500 6.500h5V12M9.500 6.500L12 4" fill="#e6ebf2" stroke="#7a8698" /></Ico>],
  ["Filo di ferro", <Ico key="e"><path d="M.5 9.500L5 6h10.500v5l-4 4H.5z" fill="#f6f2a0" /><path d="M.5 5.500h11l4-4M11.500 5.500V15M5 1.500h10.500v10l-4 3.500H.5V5.500zM.5 9.500h11l4-3.500" stroke="#2f5c28" /></Ico>],
  ["Nascondi", <Ico key="f"><path d="M1.500 4h4v11h-4zM6 1h3v14H6z" fill="#f0f2f4" stroke="#8a9099" /><path d="M10 8l6 7M16 8l-6 7M12 3v4" stroke="#6e747d" strokeWidth="1.700" /></Ico>],
  ["Fotografia", <Ico key="g"><path d="M3 5h2l1-2h4l1 2h4v9H3z" fill="#555a61" stroke="#222" /><circle cx="8" cy="9.500" r="3" fill="#e6e8ea" stroke="#222" /><path d="M0 2l3 2M3 0v3M0 6h2" stroke="#333" /><rect x="12" y="7" width="2" height="5" fill="#ddd" /></Ico>],
];

const Viewer = () => (
  <main className="-mt-[2px] -mb-[3px] flex min-w-0 flex-1 flex-col">
    <div className="flex h-7 shrink-0 items-center border border-[#b7cbe6] bg-[#cfdff4] pl-px">
      <Combo id="view" label="Vista" value="Editor 3D" pad="pl-px" className={`h-6 w-[140px] border border-[#9db4d2] bg-[#eef5fd] text-[11px] ${UI}`} btn="" />
      {viewTools.map((t, i) => t
        ? <button key={i} aria-label={t[0]} className="flex w-6 justify-center">{t[1]}</button>
        : <span key={i} className="mr-0.5 ml-1 h-5 w-[5px] border-x border-[#a9bfdd]" />)}
    </div>
    <div className="flex min-h-0 flex-1 border-b border-[#9a9fa6]">
      <div className="relative min-w-0 flex-1 border-r border-[#8ba0bc] bg-white">
        <Scene />
        <Handles />
      </div>
      <VScroll thumb="h-[17px]" />
    </div>
    <div className="flex h-[26px] shrink-0 items-center bg-[#bccee6]">
      <div className="ml-[11px] flex h-[17px] flex-1 items-center justify-between bg-gradient-to-b from-[#cbdaee] to-[#dfeaf6] px-[5px]">
        <Ico w={5} h={9}><path d="M5 0v9L0 4.500z" fill="#44546e" /></Ico>
        <span className="flex h-4 w-[17px] items-center justify-center rounded-[2px] border border-[#8ba5c9] bg-[#dce8f6]"><Ico w={8} h={7}><path d="M.5 0v7M2.500 0v7M4.500 0v7M6.500 0v7" stroke="#7d93b5" /></Ico></span>
        <Ico w={5} h={9}><path d="M0 0v9l5-4.500z" fill="#44546e" /></Ico>
      </div>
      <button className={`mx-[2px] h-[15px] w-[13px] rounded-[2px] bg-[#e4edf8] text-[11px] leading-3 text-[#1e395b] ${TAHOMA}`}>s</button>
    </div>
  </main>
);

/* ---------- properties ---------- */

const Chev = () => <Ico w={20} h={9}><path d="M7 3l3 3 3-3" stroke="#4b5a72" strokeWidth="1.800" /></Ico>;

const props = [
  ["sec", "Caratteristiche"],
  ["row", "Sezione", "100x50"],
  ["row", "Materiale", "Cls C25/30_B450C"],
  ["row", "Allineamento", "...cambia..."],
  ["row", "Tipologia trave", "Fondazione"],
  ["sub", "altre caratteristiche..."],
  ["in", "Condizioni Ambientali", "Ordinarie"],
  ["edit", "Estensione Magrone", "Entrambi i lati"],
  ["sec", "Geotecnica"],
  ["row", "Terreno/Stratigrafia", ""],
  ["row", "Profondità scavo rispetto a p", ""],
  ["check", "Presenza falda", ""],
  ["row", "Carico Limite", "...cambia..."],
  ["sec", "Geometria"],
  ["row", "Rotazione", "0.00"],
  ["row", "Luce Libera", "4.90"],
  ["subb", "PUNTO iniziale"],
  ["in", "Lunghezza", "5.30"],
  ["in", "Angolo XY", "90.00"],
  ["in", "XY", "[19.33; 20.63]"],
  ["in", "Quota", "2.00"],
];

const cell = "border-b border-[#c5d7ee] p-0 overflow-hidden whitespace-nowrap";
const val = `${cell} border-l bg-white pl-0.5`;
const PANE = "bg-[#e9f2fc]";
const BEIGE = "bg-[#f0eddc]";

const DropList = () => (
  <div className="absolute -top-[6px] -left-[5px] w-24 border-[3px] border-[#e31b23] pt-5">
    <ul role="listbox" aria-label="Estensione Magrone" className="mx-px border border-[#9db4d2] bg-white leading-[13px]">
      <li role="option" aria-selected="true" className="border border-dotted border-black bg-[#3399ff] leading-[11px] text-white">Entrambi i lati</li>
      <li role="option" aria-selected="false" className="px-px">Lato asse 3+</li>
      <li role="option" aria-selected="false" className="px-px">Lato asse 3-</li>
      <li role="option" aria-selected="false" className="px-px">Nessun lato</li>
    </ul>
  </div>
);

const PropRow = ({ row: [kind, label, value] }) => {
  if (kind === "sec")
    return <tr className="h-[19px]"><td className={`${PANE} p-0`}><Chev /></td><th colSpan={3} className={`${cell} ${PANE} pl-1 text-left font-bold`}>{label}</th></tr>;
  if (kind === "sub" || kind === "subb")
    return <tr className="h-[19px]"><td className={`${PANE} p-0`} /><td className={`${BEIGE} p-0`}><Chev /></td><th colSpan={2} className={`${cell} ${BEIGE} pl-[3px] text-left ${kind === "subb" ? "font-bold" : "font-normal"}`}>{label}</th></tr>;
  if (kind === "row")
    return <tr className="h-[19px]"><td className={`${PANE} border-r border-[#c5d7ee] p-0`} /><td colSpan={2} className={`${cell} bg-white pl-[22px]`}>{label}</td><td className={val}>{value}</td></tr>;
  if (kind === "check")
    return <tr className="h-5"><td className={`${PANE} border-r border-[#c5d7ee] p-0`} /><td colSpan={2} className={`${cell} bg-white pl-[22px]`}><label htmlFor="falda">{label}</label></td><td className={val}><input id="falda" type="checkbox" className="mx-auto block h-[13px] w-[13px] appearance-none border border-[#a9b4c4] bg-[#e6e8ec] shadow-[inset_0_0_0_2px_#fff]" /></td></tr>;
  if (kind === "in")
    return <tr className="h-[19px]"><td className={`${PANE} p-0`} /><td className={`${BEIGE} border-r border-[#c5d7ee] p-0`} /><td className={`${cell} bg-white pl-[21px]`}>{label}</td><td className={val}>{value}</td></tr>;
  return (
    <tr className="h-[19px]">
      <td className={`${PANE} p-0`} /><td className={`${BEIGE} border-r border-[#c5d7ee] p-0`} />
      <td className="relative border-b border-[#c5d7ee] bg-[#d5e5fb] p-0 pl-[21px] text-black">
        <label htmlFor="magrone">{label}</label>
        <span className="absolute -bottom-[3px] left-[18px] z-10 h-1 w-[107px] rounded-full bg-[#e31b23]" />
      </td>
      <td className="relative border-l border-[#c5d7ee] bg-white p-0">
        <Combo id="magrone" label={label} value={value} pad="pl-0" className="z-20 h-[18px] border border-dotted border-black text-[11px] leading-4" btn="bg-[#ffe08a] border-l border-[#e0b95a]" />
        <div className="absolute inset-0 z-10"><DropList /></div>
      </td>
    </tr>
  );
};

const Properties = () => (
  <aside className={`relative ml-[2px] flex w-[304px] shrink-0 flex-col rounded-[3px] border border-[#8ba0bc] bg-[#e9f2fc] px-px pb-1 ${TAHOMA} text-[11px] text-[#1e395b]`}>
    <div className="flex h-[23px] shrink-0 items-center gap-[3px] bg-[#a9bfdb] pl-[2px]">
      <Ico><rect x="2" y="1" width="12" height="15" rx="2" fill="#a8835a" /><rect x="3.500" y="2.500" width="9" height="12" fill="#fdf7ee" /><path d="M5 5.500h1M7 5.500h4M5 8.500h1M7 8.500h4M5 11.500h1M7 11.500h4" stroke="#8a6a4a" /><rect x="5" y="0" width="6" height="2" fill="#b7bcc4" /></Ico>
      <h2 className="flex-1">Proprietà</h2>
      <button aria-label="Blocca" className="pr-1.5"><Pin /></button>
    </div>
    <div className="flex h-[35px] shrink-0 items-center justify-center bg-[#0072c6] font-['DejaVu_Sans',sans-serif] text-[14px] font-bold text-white">Trave</div>
    <div className="flex h-7 shrink-0 items-end pl-1.5">
      <button className="z-10 -mb-px h-[26px] w-[61px] border border-b-0 border-[#8ba5c9] bg-white">Proprietà</button>
      <button className="h-6 w-[54px] border border-l-0 border-[#8ba5c9] bg-[#b5c9e2]">Risultati</button>
    </div>
    <div className="mr-1 ml-[2px] flex min-h-0 flex-1 flex-col rounded-[2px] border border-[#8ba5c9] bg-[#f4f9ff] pr-px pb-px">
      <div className="flex h-8 shrink-0 items-center pl-5">
        <label htmlFor="filter" className="w-[69px]">Filtro entità</label>
        <Combo id="filter" value="Trave (1)" className="h-[19px] w-[172px] border border-[#9db4d2]" pad="pl-0.5" />
        <button aria-label="Cerca" className="pl-2"><Magnifier s={17} /></button>
      </div>
      <div className="flex min-h-0 flex-1">
        <div className="min-w-0 flex-1 overflow-x-visible overflow-y-clip bg-[#e9f2fc]">
          <table className="w-full table-fixed border-separate border-spacing-0">
            <colgroup><col className="w-5" /><col className="w-[21px]" /><col /><col className="w-[89px]" /></colgroup>
            <tbody>{props.map((r) => <PropRow key={r[1]} row={r} />)}</tbody>
          </table>
        </div>
        <VScroll top thumb="h-[209px]" />
      </div>
    </div>
    <svg className="pointer-events-none absolute top-[187px] -left-[43px]" width="72" height="70" viewBox="0 0 72 70" aria-hidden="true">
      <path d="M0 16h32V0h4l34 34-34 33h-4V52H0z" fill="#ec1c24" />
    </svg>
  </aside>
);

const side = [
  ["Copia", "h-[59px]", <Ico key="1"><rect x="1" y="1" width="14" height="14" stroke="#a9adb3" strokeDasharray="2 2" /><path d="M4.500 4.500h5l2 2v6h-7z" fill="#f6efe6" stroke="#c9b08f" /></Ico>],
  ["Background", "h-[88px]", <Ico key="2"><path d="M2.500.5h7l4 4v8h-11z" fill="#fff" stroke="#c3c7cc" /><text x="0" y="15" fontSize="10" fontWeight="bold" fontFamily="Liberation Sans, sans-serif" fill="#ec9a7c">BG</text></Ico>],
  ["Filtro e Ricerca", "h-[103px]", <Ico key="3"><path d="M1 1h5v5H1zM1 10h5v5H1z" fill="#fff" stroke="#333" /><path d="M2 3l2 2 3-4" stroke="#1479c9" strokeWidth="2" /><path d="M9 1h5v5H9z" fill="#9bc3ea" stroke="#333" /><path d="M9 6v8l2-2 2 3 1-1-2-3h3z" fill="#fff" stroke="#555" /></Ico>],
  ["Armature", "h-[76px]", <Ico key="4"><path d="M1.500 3.500l3-3H14v15H1.500z" fill="#eef3fb" stroke="#4f5f8a" /><path d="M4 6h7M4 9h7M4 12h7M6 4v9M9 4v9" stroke="#38456e" strokeWidth="1.400" /></Ico>],
  ["Risultati", "h-[69px]", <Ico key="5"><rect x="1.500" y="3" width="3.500" height="11" fill="#dfe6f2" stroke="#444" strokeWidth=".7" /><rect x="5" y="7" width="3" height="7" fill="#d94f2a" stroke="#6e200e" strokeWidth=".7" /><rect x="8" y="2" width="3.500" height="12" fill="#e69c22" stroke="#7a3d10" strokeWidth=".7" /><rect x="11.500" y="5" width="3.500" height="9" fill="#3f6fd0" stroke="#1c2f66" strokeWidth=".7" /><path d="M0 15h16" stroke="#444" /></Ico>],
  ["Collegam", "h-[71px]", <Ico key="6"><path d="M.5 1.500h5v13h-5z" fill="#8ee02c" stroke="#3a6b10" /><path d="M7 3.500v10l5-6z" fill="#ffe23c" stroke="#a08a10" /><path d="M6.500 1.500h9v4h-7z" fill="#bfe0fb" stroke="#3f5f86" /></Ico>],
];

const SideTabs = () => (
  <nav className={`ml-[2px] flex w-[25px] shrink-0 flex-col gap-1 pt-0.5 ${TAHOMA} text-[11px] text-[#0d1b33]`}>
    {side.map(([t, h, icon]) => (
      <button key={t} className={`flex shrink-0 flex-col items-center gap-1 overflow-hidden border border-r-0 border-[#8ba5c9] bg-gradient-to-r from-[#d3e0f2] to-[#c4d5ec] pt-[3px] ${h}`}>
        {icon}
        <span className="flex min-h-0 flex-1 items-center whitespace-nowrap [writing-mode:vertical-rl]">{t}</span>
      </button>
    ))}
    <div className="flex flex-col items-center gap-3.5 pt-2">
      <Ico w={9} h={4}><path d="M0 4h9L4.500 0z" fill="#b3bfd0" /></Ico>
      <Ico w={9} h={4}><path d="M0 0h9L4.500 4z" fill="#5b6b85" /></Ico>
    </div>
  </nav>
);

const StatusBar = () => (
  <footer className={`mx-[7px] flex h-[23px] shrink-0 items-center border border-[#8ba0bc] bg-gradient-to-b from-[#dbe6f3] to-[#afc3dc] ${TAHOMA} text-[11px] text-[#1e395b]`}>
    <div className="flex-1" />
    <div className="flex h-[18px] w-56 items-center gap-1.5 border-l border-[#8ba0bc] pl-[3px] font-bold text-[#3a62a0]">
      <Ico w={9} h={11}><rect width="9" height="11" fill="#fff" /><rect x="2" y=".5" width="5" height="10" fill="#a9cbe8" stroke="#1f3e66" /><path d="M3 2.500h3" stroke="#1f3e66" /></Ico>
      Non calcolato
    </div>
    <div className="flex h-[18px] w-[145px] items-center border-l border-[#8ba0bc] pl-0.5 whitespace-nowrap">X: 5.47 - Y: 26.90 - Z: 0.00</div>
    <div className="h-[18px] w-[26px] border-l border-[#8ba0bc]" />
    <div className="h-[18px] w-[26px] border-l border-[#8ba0bc]" />
    <div className="flex h-[18px] w-[42px] items-end justify-end border-l border-[#8ba0bc] pr-0.5">
      <Ico w={11} h={11}><path d="M8 0h3v3H8zM8 4h3v3H8zM8 8h3v3H8zM4 4h3v3H4zM4 8h3v3H4zM0 8h3v3H0z" fill="#8ba0bc" /></Ico>
    </div>
  </footer>
);

export default function App() {
  return (
    <div className="h-screen bg-white pr-[3px] pb-2">
      <div className="flex h-full flex-col overflow-hidden rounded-[6px] border border-[#8499b5] bg-[#bed0e9] bg-gradient-to-b from-[#c4d6ec] to-[#bed0e9]">
        <Header />
        <Ribbon />
        <div className="mx-[7px] flex min-h-0 flex-1 gap-[2px] border-x border-[#8ba0bc] bg-[#c6d7ec] pt-[5px] pb-[3px] pl-px">
          <ProjectPanel />
          <Viewer />
          <Properties />
          <SideTabs />
        </div>
        <StatusBar />
        <div className="h-[7px] shrink-0" />
      </div>
    </div>
  );
}
